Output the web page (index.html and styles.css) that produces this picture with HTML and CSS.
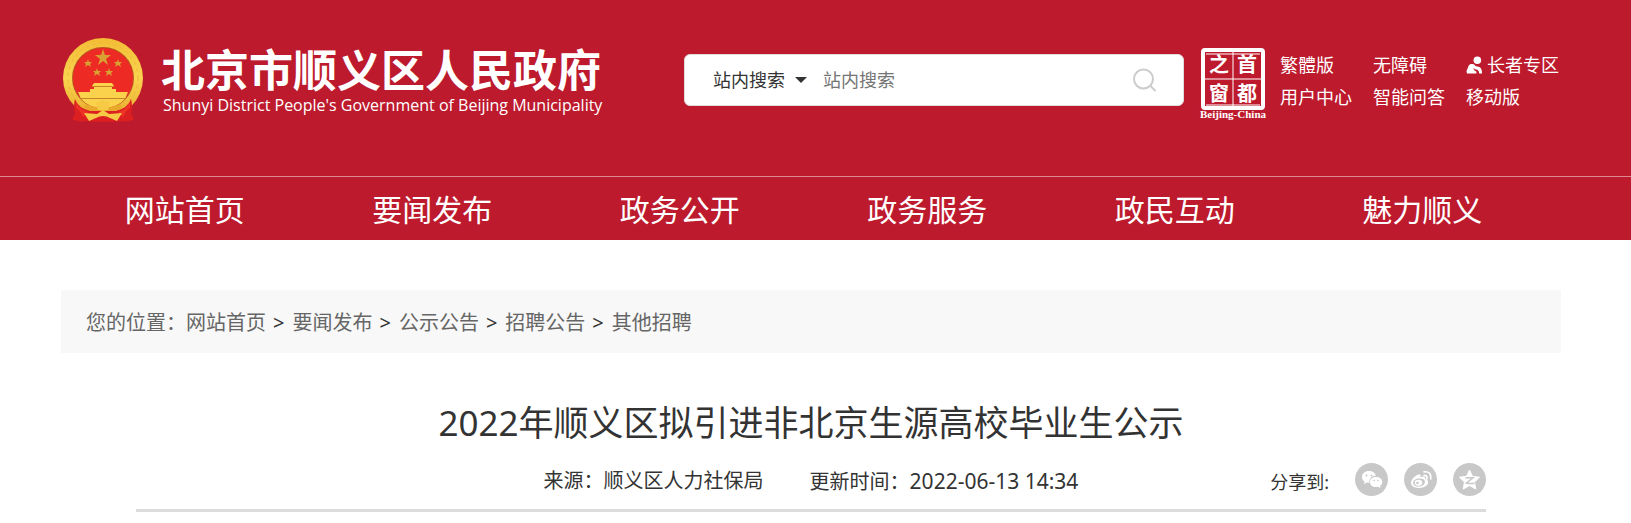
FILE: index.html
```html
<!DOCTYPE html>
<html lang="zh-CN">

<head>
    <meta charset="UTF-8">
    <meta name="viewport" content="width=device-width, initial-scale=1.0">
    <title>2022年顺义区拟引进非北京生源高校毕业生公示</title>
    <link rel="stylesheet" href="styles.css">
</head>

<body>
    <header class="header">
        <div class="wrap top">
            <a class="logo" href="#">
                <svg class="emblem" viewBox="0 0 80 84" aria-hidden="true">
                    <defs>
                        <linearGradient id="gold" x1="0" y1="0" x2="0" y2="1">
                            <stop offset="0" stop-color="#f3bd35" />
                            <stop offset=".5" stop-color="#f9d450" />
                            <stop offset="1" stop-color="#e9a92b" />
                        </linearGradient>
                    </defs>
                    <circle cx="40" cy="40" r="40" fill="url(#gold)" />
                    <circle cx="40" cy="40" r="35" fill="none" stroke="#efb638" stroke-width="1" stroke-dasharray="3 4" />
                    <circle cx="40" cy="40" r="31" fill="#b8541f" />
                    <circle cx="40" cy="40" r="30" fill="#ee2a24" />
                    <g fill="#d9a032">
                        <path d="M40 11l2 6h6l-5 4 2 6-5-4-5 4 2-6-5-4h6z" />
                        <path d="M25 21l1 3h3l-2 2 1 3-3-2-3 2 1-3-2-2h3z" />
                        <path d="M55 21l1 3h3l-2 2 1 3-3-2-3 2 1-3-2-2h3z" />
                        <path d="M34 30l1 3h3l-2 2 1 3-3-2-3 2 1-3-2-2h3z" />
                        <path d="M46 30l1 3h3l-2 2 1 3-3-2-3 2 1-3-2-2h3z" />
                    </g>
                    <path fill="#fbd24c" d="M29 48l2-3h18l2 3zM31 49h18v3H31zM27 51h26v4H27zM15 54h50l-3 7q-8 9-22 9T18 61z" />
                    <path fill="#c9822a" d="M29 48h22v1H29zM17 60h46v1H17z" />
                    <path fill="#e9a92b" d="M23 66q17 8 34 0l4 8H19z" />
                    <path fill="#dc1f20" d="M12 61q3 9 15 12l-5 10q-6 2-13-2l3-6q-2-6 0-14zM68 61q-3 9-15 12l5 10q6 2 13-2l-3-6q2-6 0-14zM27 73h26l5 10q-18 2-36 0z" />
                    <path fill="#ee3326" d="M13 64q4 8 12 10l-5 5q-3-7-7-9zM67 64q-4 8-12 10l5 5q3-7 7-9z" />
                    <path fill="#f7ca45" d="M33 66q2-4 4-2 3-4 6 0 3-2 4 2l-2 6H35zM21 75l13 1 6-4 6 4 13-1-5 8-7-3q-7-4-14 0l-7 3z" />
                </svg>
                <span class="logo-text">
                    <span class="logo-cn">北京市顺义区人民政府</span>
                    <span class="logo-en">Shunyi District People's Government of Beijing Municipality</span>
                </span>
            </a>

            <form class="search">
                <div class="search-type">
                    <select aria-label="搜索范围">
                        <option>站内搜索</option>
                    </select>
                </div>
                <input type="text" placeholder="站内搜索" aria-label="站内搜索">
                <button type="button" aria-label="搜索">
                    <svg viewBox="0 0 24 24" aria-hidden="true">
                        <circle cx="10.500" cy="11" r="9.500" />
                        <path d="M17.500 18L22 22.500" />
                    </svg>
                </button>
            </form>

            <a class="seal" href="#" aria-label="首都之窗">
                <svg viewBox="0 0 70 72" aria-hidden="true">
                    <rect x="5" y="2" width="60" height="58" rx="2" fill="none" stroke="#fff" stroke-width="4" />
                    <path d="M35 3v56M6 31h58M8 6h54M8 57h54" stroke="#fff" stroke-width="1" />
                    <g class="seal-char">
                        <text x="21" y="24">之</text>
                        <text x="49" y="24">首</text>
                        <text x="21" y="53">窗</text>
                        <text x="49" y="53">都</text>
                    </g>
                    <text class="seal-en" x="35" y="70">Beijing-China</text>
                </svg>
            </a>

            <div class="links">
                <a href="#">繁體版</a>
                <a href="#">无障碍</a>
                <a href="#" class="elder">
                    <svg viewBox="0 0 18 18" aria-hidden="true">
                        <circle cx="12" cy="4" r="4" />
                        <path d="M1 18q-1-3 1-6 1-5 5-4 2 0 3 2l4 1q3 1 3 7h-3q0-3-2-4-3 0-4-2 0 3 3 4v2z" />
                    </svg>长者专区</a>
                <a href="#">用户中心</a>
                <a href="#">智能问答</a>
                <a href="#">移动版</a>
            </div>
        </div>

        <nav class="nav">
            <div class="wrap nav-list">
                <a href="#">网站首页</a>
                <a href="#">要闻发布</a>
                <a href="#">政务公开</a>
                <a href="#">政务服务</a>
                <a href="#">政民互动</a>
                <a href="#">魅力顺义</a>
            </div>
        </nav>
    </header>

    <main class="main">
        <div class="wrap crumbs">
            <span>您的位置：</span>
            <a href="#">网站首页</a><i>&gt;</i>
            <a href="#">要闻发布</a><i>&gt;</i>
            <a href="#">公示公告</a><i>&gt;</i>
            <a href="#">招聘公告</a><i>&gt;</i>
            <a href="#">其他招聘</a>
        </div>

        <article class="wrap article">
            <h1>2022年顺义区拟引进非北京生源高校毕业生公示</h1>
            <div class="meta">
                <div class="info">
                    <span>来源：顺义区人力社保局</span>
                    <span>更新时间：<time>2022-06-13 14:34</time></span>
                </div>
                <div class="share">
                    <span>分享到:</span>
                    <a href="#" aria-label="微信">
                        <svg viewBox="0 0 33 33" aria-hidden="true">
                            <circle cx="16.500" cy="16.500" r="16.500" fill="#c8c8c8" />
                            <path fill="#fff" d="M14 8c-4 0-7 2.500-7 6 0 2 1 3.500 2.500 4.500L9 21l3-1.500 2.500.3C14 15 17.500 12.500 21 12.700 20 10 17.500 8 14 8z" />
                            <path fill="#fff" d="M21 14c-3.500 0-6 2-6 5s2.500 5 6 5l2-.3 2.500 1.300-.5-2c1.500-1 2.300-2.300 2.300-4 0-3-2.800-5-6.300-5z" />
                            <g fill="#c8c8c8">
                                <circle cx="11.500" cy="12.500" r="1" />
                                <circle cx="16.500" cy="12.500" r="1" />
                                <circle cx="19" cy="17.500" r=".8" />
                                <circle cx="23" cy="17.500" r=".8" />
                            </g>
                        </svg>
                    </a>
                    <a href="#" aria-label="微博">
                        <svg viewBox="0 0 33 33" aria-hidden="true">
                            <circle cx="16.500" cy="16.500" r="16.500" fill="#c8c8c8" />
                            <path fill="#fff" d="M14.500 11.500c1.500-.5 2.500.5 2 2.500 3-1.200 5.500-.7 4.700 2 2 .6 3 1.800 3 3.300 0 3.200-4.200 5.700-8.700 5.700-4.700 0-8.500-2-8.500-5.300 0-3.200 4-7.200 7.500-8.200z" />
                            <ellipse cx="15" cy="19.500" rx="6" ry="4" fill="#c8c8c8" transform="rotate(-8 15 19.500)" />
                            <ellipse cx="14.500" cy="19.700" rx="3.800" ry="3" fill="#fff" />
                            <circle cx="13.500" cy="20" r="1.300" fill="#c8c8c8" />
                            <path fill="none" stroke="#fff" stroke-width="1.700" stroke-linecap="round" d="M20 12.500q3.500-.5 3 3.300M20 8.800q7.500-.8 6.800 7" />
                        </svg>
                    </a>
                    <a href="#" aria-label="QQ空间">
                        <svg viewBox="0 0 33 33" aria-hidden="true">
                            <circle cx="16.500" cy="16.500" r="16.500" fill="#c8c8c8" />
                            <path fill="#fff" stroke="#fff" stroke-linejoin="round" d="M16.500 7l3 6.300 7 .9-5 4.800 1.300 7-6.300-3.400L10.200 26l1.300-7-5-4.800 7-.9z" />
                            <path fill="none" stroke="#c8c8c8" stroke-width="1.500" d="M12.500 14.800h7.500l-6.500 5.200q4 1 8 .3" />
                        </svg>
                    </a>
                </div>
            </div>
        </article>
    </main>
</body>

</html>
```

FILE: styles.css
```css
* {
    box-sizing: border-box;
}

body {
    margin: 0;
    font-family: "Noto Sans", "Noto Sans CJK SC", sans-serif;
    font-size: 20px;
    line-height: 30px;
    color: #333;
    background: #fff;
}

a {
    color: inherit;
    text-decoration: none;
}

svg {
    display: block;
}

.wrap {
    max-width: 1500px;
    margin: 0 auto;
}

.header {
    background: #bd1a2d;
    color: #fff;
}

.top,
.nav,
.main {
    padding-right: 9px;
}

.top {
    display: flex;
    align-items: flex-start;
    max-width: 1509px;
    height: 176px;
    padding-top: 38px;
}

.logo {
    display: flex;
    gap: 18px;
    margin-left: 2px;
}

.emblem {
    width: 80px;
    height: 84px;
}

.logo-text {
    display: flex;
    flex-direction: column;
    padding-top: 8px;
    white-space: nowrap;
}

.logo-cn {
    font-size: 44px;
    font-weight: 700;
    line-height: 48px;
}

.logo-en {
    padding-left: 2px;
    font-family: "Open Sans", sans-serif;
    font-size: 16px;
    line-height: 22px;
}

.search {
    display: flex;
    align-items: center;
    width: 500px;
    height: 52px;
    margin: 16px 14px 0 auto;
    padding: 0 26px 0 28px;
    background: #fff;
    border: 1px solid #ddd;
    border-radius: 6px;
}

.search-type {
    position: relative;
}

.search-type::after {
    content: "";
    position: absolute;
    top: 12px;
    right: 16px;
    border: 6px solid transparent;
    border-top-color: #333;
    pointer-events: none;
}

.search select,
.search input {
    height: 30px;
    padding: 0;
    border: 0;
    outline: 0;
    background: none;
    font-family: inherit;
    font-size: 18px;
    color: #333;
}

.search select {
    appearance: none;
    width: 110px;
}

.search input {
    flex: 1;
    min-width: 0;
}

.search input::placeholder {
    color: #757575;
}

.search button {
    padding: 0;
    border: 0;
    background: none;
    cursor: pointer;
}

.search button svg {
    width: 24px;
    height: 24px;
    fill: none;
    stroke: #ccc;
    stroke-width: 2;
    stroke-linecap: round;
}

.seal {
    margin-top: 10px;
}

.seal svg {
    width: 70px;
    height: 72px;
    fill: #fff;
    text-anchor: middle;
}

.seal-char {
    font-family: "Noto Sans CJK SC", sans-serif;
    font-size: 20px;
    font-weight: 700;
}

.seal-en {
    font-family: "Liberation Serif", serif;
    font-size: 11px;
    font-weight: 700;
}

.links {
    display: grid;
    grid-template-columns: repeat(3, 93px);
    margin: 11px 2px 0 12px;
    font-size: 18px;
    line-height: 32px;
    white-space: nowrap;
}

.elder {
    display: flex;
    align-items: center;
    gap: 4px;
}

.elder svg {
    width: 18px;
    height: 18px;
    fill: #fff;
}

.nav {
    border-top: 1px solid #dd8791;
}

.nav-list {
    display: flex;
    padding-right: 15px;
}

.nav-list a {
    flex: 1;
    padding: 3px 0 1px;
    font-size: 30px;
    line-height: 59px;
    text-align: center;
}

.main {
    padding-top: 50px;
}

.crumbs {
    display: flex;
    padding: 18px 25px 15px;
    background: #f8f8f8;
    color: #666;
}

.crumbs i {
    margin: 0 8px 0 7px;
    font-style: normal;
    color: #333;
}

.article {
    padding: 44px 75px 0;
}

.article h1 {
    margin: 0;
    font-size: 35px;
    font-weight: 400;
    line-height: 52px;
    text-align: center;
}

.meta {
    display: grid;
    grid-template-columns: 1fr auto 1fr;
    align-items: center;
    margin-top: 12px;
    padding-bottom: 12px;
    border-bottom: 3px solid #dcdcdc;
}

.info,
.share span {
    padding-top: 5px;
}

.info {
    grid-column: 2;
    display: flex;
    gap: 46px;
}

.info time {
    font-size: 21px;
}

.share {
    display: flex;
    align-items: center;
    justify-content: flex-end;
    gap: 16px;
    font-size: 18px;
}

.share span {
    margin-right: 10px;
}

.share svg {
    width: 33px;
    height: 33px;
}
```
